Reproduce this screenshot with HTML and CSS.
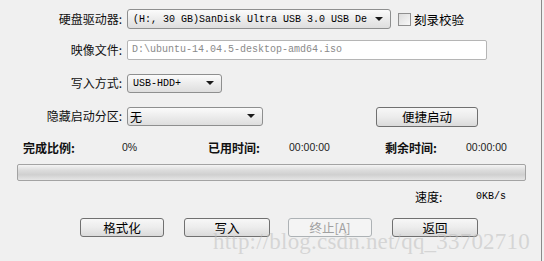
FILE: index.html
```html
<!DOCTYPE html>
<html lang="zh-CN">
<head>
<meta charset="utf-8">
<title>写入硬盘映像</title>
<link rel="stylesheet" href="styles.css">
</head>
<body>
<div class="window">
  <div class="form">
    <div class="row r1">
      <span class="label">硬盘驱动器:</span>
      <div class="select s-drive"><span class="val mono">(H:, 30 GB)SanDisk Ultra USB 3.0 USB De</span><span class="arrow"></span></div>
      <div class="check"><span class="box"></span><span>刻录校验</span></div>
    </div>
    <div class="row r2">
      <span class="label">映像文件:</span>
      <div class="input mono">D:\ubuntu-14.04.5-desktop-amd64.iso</div>
    </div>
    <div class="row r3">
      <span class="label">写入方式:</span>
      <div class="select s-mode"><span class="val mono">USB-HDD+</span><span class="arrow"></span></div>
    </div>
    <div class="row r4">
      <span class="label">隐藏启动分区:</span>
      <div class="select s-hide"><span class="val">无</span><span class="arrow"></span></div>
      <div class="btn b-quick">便捷启动</div>
    </div>
  </div>

  <div class="stats">
    <span class="k">完成比例:</span>
    <span class="v">0%</span>
    <span class="k">已用时间:</span>
    <span class="v">00:00:00</span>
    <span class="k">剩余时间:</span>
    <span class="v">00:00:00</span>
  </div>

  <div class="progress"></div>

  <div class="speed">
    <span class="sk">速度:</span>
    <span class="sv mono">0KB/s</span>
  </div>

  <div class="buttons">
    <div class="btn b1">格式化</div>
    <div class="btn b2">写入</div>
    <div class="btn b3 disabled">终止[A]</div>
    <div class="btn b4">返回</div>
  </div>

  <div class="watermark">http://blog.csdn.net/qq_33702710</div>
</div>
</body>
</html>
```

FILE: styles.css
```css
html, body {
  margin: 0;
  padding: 0;
  background: #f0f0f0;
}

body {
  font-family: "Noto Sans CJK SC", "Liberation Sans", sans-serif;
  font-size: 12px;
  color: #000;
}

.window {
  position: relative;
  width: 541px;
  height: 261px;
  border-right: 1px solid #8a8a8a;
  background: #f0f0f0;
  overflow: hidden;
}

.mono {
  font-family: "Liberation Mono", "Noto Sans CJK SC", monospace;
  font-size: 10px;
}

.form {
  display: flex;
  flex-direction: column;
  padding-top: 9px;
}

.row {
  display: flex;
  align-items: center;
  height: 20px;
}

.r2 { margin-top: 11px; }
.r3 { margin-top: 13px; }
.r4 { margin-top: 13px; }

.label {
  width: 122px;
  text-align: right;
  line-height: 20px;
  margin-right: 5px;
  color: #111;
}

.select {
  box-sizing: border-box;
  height: 20px;
  display: flex;
  align-items: center;
  justify-content: space-between;
  border: 1px solid #8e8f8f;
  border-radius: 3px;
  background: linear-gradient(#fbfbfb, #ececec 50%, #dedede);
  padding: 0 7px 0 5px;
}

.s-drive { width: 264px; }
.s-mode { width: 95px; height: 19px; }
.s-hide { width: 136px; height: 19px; padding-left: 2px; }

.val {
  white-space: nowrap;
  overflow: hidden;
}

.arrow {
  width: 0;
  height: 0;
  border-left: 4px solid transparent;
  border-right: 4px solid transparent;
  border-top: 4px solid #1a1a1a;
  flex: none;
}

.check {
  display: flex;
  align-items: center;
  margin-left: 7px;
  font-size: 12.5px;
}

.box {
  box-sizing: border-box;
  width: 13px;
  height: 13px;
  border: 1px solid #8f8f8f;
  background: linear-gradient(135deg, #dcdcdc, #f8f8f8);
  margin-right: 3px;
}

.input {
  box-sizing: border-box;
  width: 360px;
  height: 20px;
  line-height: 18px;
  border: 1px solid #b5b5b5;
  border-radius: 2px;
  background: #fff;
  color: #8a8a8a;
  padding-left: 4px;
}

.btn {
  box-sizing: border-box;
  height: 20px;
  display: flex;
  align-items: center;
  justify-content: center;
  border: 1px solid #707070;
  border-radius: 3px;
  background: linear-gradient(#f7f7f7, #ececec 50%, #dadada);
  font-size: 12.5px;
}

.b-quick {
  width: 102px;
  margin-left: 113px;
  margin-top: 1px;
}

.stats {
  display: grid;
  grid-template-columns: 99px 86px 81px 96px 81px auto;
  padding-left: 23px;
  margin-top: 11px;
  height: 20px;
  align-items: center;
}

.stats .k {
  font-weight: bold;
  font-size: 12px;
  color: #111;
}

.stats .v {
  font-family: "Liberation Sans", sans-serif;
  font-size: 10.5px;
  color: #222;
}

.progress {
  box-sizing: border-box;
  margin: 7px 0 0 17px;
  width: 509px;
  height: 17px;
  border: 1px solid #a3a3a3;
  border-radius: 2px;
  background: linear-gradient(#f4f4f4, #dcdcdc 35%, #d0d0d0 65%, #e6e6e6);
}

.speed {
  display: flex;
  align-items: center;
  height: 20px;
  margin-top: 5px;
  padding-left: 415px;
}

.sk {
  width: 61px;
}

.buttons {
  display: flex;
  margin-top: 12px;
  padding-left: 80px;
}

.buttons .btn {
  height: 19px;
}

.b1 { width: 84px; }
.b2 { width: 86px; margin-left: 20px; }
.b3 { width: 84px; margin-left: 18px; }
.b4 { width: 86px; margin-left: 20px; }

.btn.disabled {
  border-color: #adb2b5;
  background: #f4f4f4;
  color: #a0a0a0;
}

.watermark {
  position: absolute;
  left: 213px;
  top: 229px;
  font-family: "Liberation Serif", serif;
  font-size: 23px;
  color: rgba(190, 190, 190, 0.55);
  white-space: nowrap;
  letter-spacing: 0.2px;
  pointer-events: none;
}
```
